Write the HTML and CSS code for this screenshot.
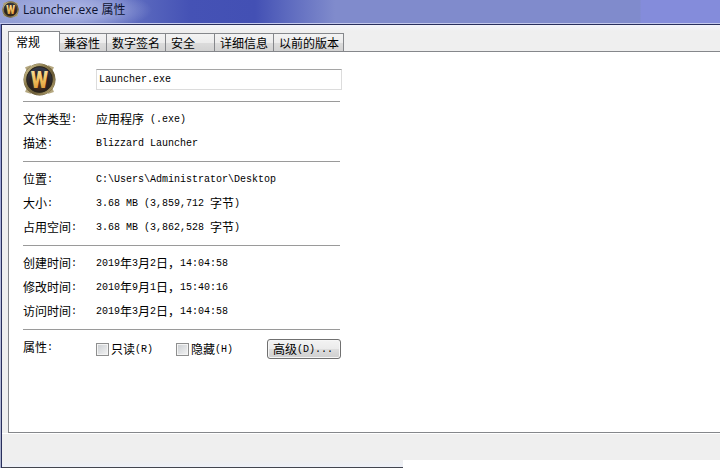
FILE: index.html
```html
<!DOCTYPE html>
<html lang="zh-CN">
<head>
<meta charset="utf-8">
<title>Launcher.exe 属性</title>
<link rel="stylesheet" href="styles.css">
</head>
<body>
<svg class="defs" aria-hidden="true">
  <defs>
    <linearGradient id="ring" x1="0" y1="0" x2="1" y2="1">
      <stop offset="0" stop-color="#d8cc9c"/>
      <stop offset=".35" stop-color="#8a7a4c"/>
      <stop offset=".65" stop-color="#6b5c38"/>
      <stop offset="1" stop-color="#c6b47c"/>
    </linearGradient>
    <radialGradient id="core" cx=".5" cy=".65" r=".6">
      <stop offset="0" stop-color="#5a3418"/>
      <stop offset=".6" stop-color="#2b211d"/>
      <stop offset="1" stop-color="#34394a"/>
    </radialGradient>
    <linearGradient id="gold" x1="0" y1="0" x2="0" y2="1">
      <stop offset="0" stop-color="#fff0b8"/>
      <stop offset=".5" stop-color="#f0bf5c"/>
      <stop offset="1" stop-color="#d98a2c"/>
    </linearGradient>
    <symbol id="emblem" viewBox="0 0 32 32">
      <path d="M2 4L8 2L4 9ZM30 4L24 2L28 9ZM2 28L8 30L4 23ZM30 28L24 30L28 23Z" fill="#b5a880"/>
      <circle cx="16" cy="16" r="15.5" fill="#6a5d3c"/>
      <circle cx="16" cy="16" r="14" fill="none" stroke="url(#ring)" stroke-width="2.5"/>
      <circle cx="16" cy="16" r="12.3" fill="url(#core)" stroke="#2a251c"/>
      <text class="letter" x="16" y="24" text-anchor="middle">W</text>
    </symbol>
  </defs>
</svg>
<header class="titlebar">
  <svg class="small-icon" aria-hidden="true"><use href="#emblem"/></svg>
  <h1>Launcher.exe 属性</h1>
</header>
<main class="window">
  <nav class="tabs">
    <button class="tab active" type="button">常规</button>
    <button class="tab" type="button">兼容性</button>
    <button class="tab" type="button">数字签名</button>
    <button class="tab wide" type="button">安全</button>
    <button class="tab" type="button">详细信息</button>
    <button class="tab last" type="button">以前的版本</button>
  </nav>
  <form class="panel">
    <div class="group file">
      <svg class="big-icon" aria-hidden="true"><use href="#emblem"/></svg>
      <input class="name" type="text" value="Launcher.exe" aria-label="文件名">
    </div>
    <dl class="group">
      <dt>文件类型<span class="m">:</span></dt><dd>应用程序<span class="m"> (.exe)</span></dd>
      <dt>描述<span class="m">:</span></dt><dd><span class="m">Blizzard Launcher</span></dd>
    </dl>
    <dl class="group">
      <dt>位置<span class="m">:</span></dt><dd><span class="m">C:\Users\Administrator\Desktop</span></dd>
      <dt>大小<span class="m">:</span></dt><dd><span class="m">3.68 MB (3,859,712 </span>字节<span class="m">)</span></dd>
      <dt>占用空间<span class="m">:</span></dt><dd><span class="m">3.68 MB (3,862,528 </span>字节<span class="m">)</span></dd>
    </dl>
    <dl class="group">
      <dt>创建时间<span class="m">:</span></dt><dd><span class="m">2019</span>年<span class="m">3</span>月<span class="m">2</span>日，<span class="m">14:04:58</span></dd>
      <dt>修改时间<span class="m">:</span></dt><dd><span class="m">2010</span>年<span class="m">9</span>月<span class="m">1</span>日，<span class="m">15:40:16</span></dd>
      <dt>访问时间<span class="m">:</span></dt><dd><span class="m">2019</span>年<span class="m">3</span>月<span class="m">2</span>日，<span class="m">14:04:58</span></dd>
    </dl>
    <div class="group attributes">
      <span>属性<span class="m">:</span></span>
      <div class="options">
        <label class="option"><input type="checkbox"><span>只读<span class="m">(R)</span></span></label>
        <label class="option"><input type="checkbox"><span>隐藏<span class="m">(H)</span></span></label>
        <button class="advanced" type="button">高级<span class="m">(D)...</span></button>
      </div>
    </div>
  </form>
</main>
<footer class="bottom">
  <div class="edge"></div>
</footer>
</body>
</html>
```
FILE: styles.css
```css
* {
  box-sizing: border-box;
}

body {
  margin: 0;
  min-height: 100vh;
  display: flex;
  flex-direction: column;
  background: #fff;
  color: #000;
  font: 12px/24px "Noto Sans CJK SC", sans-serif;
}

body::before {
  content: "";
  position: absolute;
  z-index: 1;
  top: 24px;
  bottom: 0;
  left: 0;
  width: 1px;
  background: linear-gradient(to bottom, #7682cc, #b9bfdd 60%, #a9b0cc);
}

button,
input {
  margin: 0;
  font: inherit;
  color: inherit;
}

.defs {
  position: absolute;
  width: 0;
  height: 0;
}

.letter {
  font: bold 23px "Liberation Sans Narrow", "Roboto Condensed", Roboto, sans-serif;
  fill: url(#gold);
}

.m {
  font-family: "Liberation Mono", monospace;
  font-size: 10px;
  line-height: 1;
  vertical-align: 2px;
  white-space: pre;
}

.titlebar {
  display: flex;
  align-items: center;
  gap: 4px;
  height: 24px;
  padding: 0 2px 4px;
  border-bottom: 1px solid #c6cbee;
  background:
    radial-gradient(ellipse 84px 22px at 68px 10px, #b0b9e6 0, #a5afe0c0 50%, #a5afe000 100%),
    linear-gradient(to right, #929ed4 0, #7481ca 80px, #5a68be 140px, #4552b5 190px, #4350b4 255px, #5b68be 285px, #808bcc 335px, #808bcc 640px, #848cdb 641px);
}

.titlebar h1 {
  margin: 0;
  font: 12px/18px "Open Sans", "Noto Sans CJK SC", sans-serif;
  color: #0c1230;
}

.small-icon {
  width: 17px;
  height: 17px;
}

.window {
  flex: 1;
  display: flex;
  flex-direction: column;
  margin-left: 1px;
  padding: 6px 0 0 6px;
  border-top: 1px solid #292f5c;
  border-left: 1px solid #292f5c;
  background: linear-gradient(to bottom, #f3f4fc, #efefef 6px);
}

.tabs {
  display: flex;
  align-items: flex-end;
  position: relative;
  margin-bottom: -1px;
}

.tab {
  height: 19px;
  padding: 0 5px;
  border: 1px solid #85878b;
  border-right: 0;
  background: linear-gradient(to bottom, #f3f3f3 0, #ececec 50%, #dcdcdc 52%, #d2d2d2 100%);
  line-height: 17px;
}

.tab.active {
  height: 21px;
  padding: 0 19px 0 7px;
  border-right: 1px solid #85878b;
  border-bottom-color: #fff;
  background: #fff;
}

.active + .tab {
  padding: 0 6px 0 4px;
  border-left: 0;
}

.tab.wide {
  padding-right: 19px;
}

.tab.last {
  padding-right: 4px;
  border-right: 1px solid #85878b;
}

.panel {
  flex: 1;
  padding: 11px 14px;
  border: 1px solid #85878b;
  border-right: 0;
  background: #fff;
}

.group {
  display: grid;
  grid-template-columns: 73px 1fr;
  grid-auto-rows: 24px;
  max-width: 317px;
  margin: 0;
  padding: 5px 0 6px;
  border-bottom: 1px solid #9a9a9a;
}

.group dd {
  margin: 0;
}

.file {
  grid-auto-rows: auto;
  align-items: center;
  padding: 0 0 5px;
}

.big-icon {
  width: 33px;
  height: 33px;
}

.name {
  width: 246px;
  height: 21px;
  padding: 0 2px;
  border: 1px solid #dcdcdc;
  border-top-color: #a5a5a5;
  background: #fff;
  font: 10px/18px "Liberation Mono", monospace;
}

.attributes {
  grid-auto-rows: auto;
  border-bottom: 0;
}

.options {
  display: flex;
  align-items: center;
  height: 28px;
}

.option {
  display: flex;
  align-items: center;
  gap: 2px;
  width: 80px;
}

.option input {
  appearance: none;
  width: 13px;
  height: 13px;
  border: 1px solid #8e8f8f;
  background: linear-gradient(135deg, #c9cdd1, #f4f4f4);
  box-shadow: inset 0 0 0 1px #f4f4f4;
}

.advanced {
  flex: none;
  width: 74px;
  height: 20px;
  margin-left: 11px;
  padding: 0 5px;
  border: 1px solid #707070;
  border-radius: 3px;
  background: linear-gradient(to bottom, #f3f3f3 0, #ebebeb 50%, #dddddd 52%, #cfcfcf 100%);
  box-shadow: inset 0 0 0 1px #f6f6f6;
  line-height: 16px;
  text-align: left;
  white-space: nowrap;
}

.bottom {
  position: relative;
  padding-top: 27px;
  background: linear-gradient(to bottom, #fff 1px, #efefef 1px 27px, #fff 27px);
}

.bottom::before {
  content: "";
  position: absolute;
  top: 0;
  bottom: 0;
  left: 1px;
  width: 1px;
  background: #292f5c;
}

.edge {
  width: 56%;
  height: 8px;
  border-bottom: 1px solid #42454f;
  background: linear-gradient(to bottom, #efefef, #edf0f8);
}
```
